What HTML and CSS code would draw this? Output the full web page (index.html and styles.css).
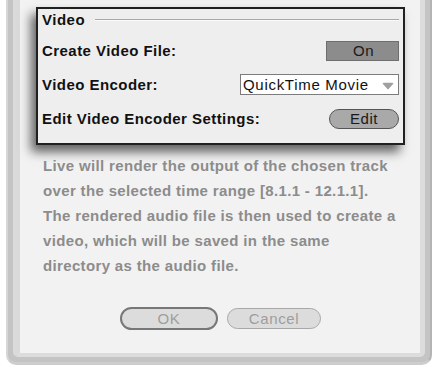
FILE: index.html
```html
<!DOCTYPE html>
<html lang="en">

<head>
  <meta charset="UTF-8" />
  <meta name="viewport" content="width=device-width, initial-scale=1.0" />
  <title>Render Video</title>
  <link rel="stylesheet" href="styles.css">
</head>

<body>
  <div class="dialog">
    <div class="panel">
      <div class="video-box">
        <div class="box-title">
          <span>Video</span>
          <span class="title-rule"></span>
        </div>
        <div class="row row-first">
          <span class="label">Create Video File:</span>
          <button class="toggle-on">On</button>
        </div>
        <div class="row">
          <span class="label">Video Encoder:</span>
          <div class="select">
            <span>QuickTime Movie</span>
            <svg class="select-arrow" width="12" height="8" viewBox="0 0 12 8">
              <path d="M1.5 1.5 L10.5 1.5 L6 6.5 Z" fill="#a0a0a0" stroke="#a0a0a0" stroke-width="1.5" stroke-linejoin="round" />
            </svg>
          </div>
        </div>
        <div class="row">
          <span class="label">Edit Video Encoder Settings:</span>
          <button class="pill-btn">Edit</button>
        </div>
      </div>
      <p class="info">
        Live will render the output of the chosen track<br>
        over the selected time range [8.1.1 - 12.1.1].<br>
        The rendered audio file is then used to create a<br>
        video, which will be saved in the same<br>
        directory as the audio file.
      </p>
      <div class="actions">
        <button class="btn btn-default">OK</button>
        <button class="btn">Cancel</button>
      </div>
    </div>
  </div>
</body>

</html>
```

FILE: styles.css
```css
* {
  box-sizing: border-box;
}

body {
  margin: 0;
  padding: 0 5px 0 6px;
  background: #fff;
  font-family: "Liberation Sans", Arial, sans-serif;
}

.dialog {
  width: 426px;
  height: 365px;
  background: #c4c4c4;
  border-left: 2px solid #d6d6d6;
  border-right: 2px solid #b4b4b4;
  border-bottom: 3px solid #cdcdcd;
  border-radius: 0 0 10px 10px;
  padding: 0 5px 5px 5px;
}

.panel {
  height: 100%;
  background: #f2f2f2;
  border-left: 7px solid #dadada;
  border-right: 5px solid #dcdcdc;
  border-bottom: 4px solid #dcdcdc;
  border-radius: 0 0 5px 5px;
  padding-top: 7px;
}

.video-box {
  margin: 0 15px 0 16px;
  height: 138px;
  background: #eeeeee;
  border: 2px solid #202020;
  padding: 0 4px 0 4px;
  box-shadow: -5px 7px 10px rgba(0, 0, 0, 0.6);
  display: flex;
  flex-direction: column;
}

.box-title {
  height: 20px;
  display: flex;
  align-items: center;
  font-size: 15px;
  font-weight: bold;
  letter-spacing: 0.5px;
  color: #111;
}

.title-rule {
  flex: 1;
  margin-left: 10px;
  margin-top: 1px;
  border-top: 1px solid #a8a8a8;
  border-bottom: 1px solid #fafafa;
}

.row {
  height: 21px;
  margin-top: 13px;
  display: flex;
  align-items: center;
  justify-content: space-between;
}

.row-first {
  margin-top: 11px;
}

.label {
  font-size: 15px;
  font-weight: bold;
  color: #111;
  letter-spacing: 0.45px;
}

.toggle-on {
  width: 73px;
  height: 20px;
  appearance: none;
  border: 1px solid #6e6e6e;
  background: #8c8c8c;
  color: #1a1a1a;
  font-family: inherit;
  font-size: 15px;
  letter-spacing: 0.6px;
  padding: 0 0 0 2px;
}

.select {
  width: 159px;
  height: 21px;
  background: #fff;
  border: 1px solid #7c7c7c;
  display: flex;
  align-items: center;
  justify-content: space-between;
  padding: 0 4px 0 2px;
  font-size: 15px;
  letter-spacing: 0.7px;
  color: #111;
}

.select-arrow {
  display: block;
  margin-top: 2px;
}

.pill-btn {
  width: 70px;
  height: 20px;
  appearance: none;
  border: 1px solid #555;
  border-radius: 10px;
  background: #a9a9a9;
  color: #1a1a1a;
  font-family: inherit;
  font-size: 15px;
  letter-spacing: 0.6px;
  padding: 0;
}

.info {
  margin: 8px 0 0 23px;
  font-size: 15px;
  font-weight: bold;
  line-height: 25px;
  letter-spacing: 0.35px;
  color: #8c8c8c;
  white-space: nowrap;
}

.actions {
  margin-top: 29px;
  display: flex;
  justify-content: center;
  gap: 9px;
  padding-left: 1px;
}

.btn {
  width: 94px;
  height: 21px;
  margin-top: 1px;
  appearance: none;
  border: 1px solid #a8a8a8;
  border-radius: 11px;
  background: #dcdcdc;
  color: #9e9e9e;
  font-family: inherit;
  font-size: 15px;
  letter-spacing: 0.6px;
  padding: 0;
}

.btn-default {
  width: 98px;
  height: 23px;
  margin-top: 0;
  border: 2px solid #777;
  border-radius: 12px;
}
```
